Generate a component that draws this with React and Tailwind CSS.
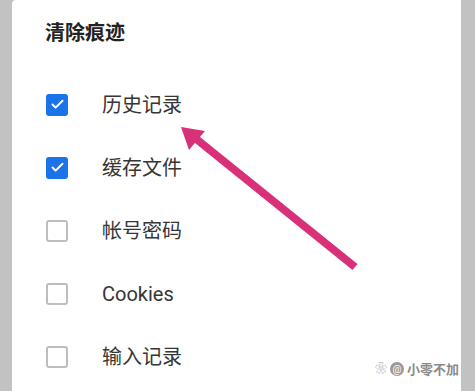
import { Check } from 'lucide-react';

const items = [
  { label: '历史记录', checked: true },
  { label: '缓存文件', checked: true },
  { label: '帐号密码', checked: false },
  { label: 'Cookies', checked: false },
  { label: '输入记录', checked: false },
];

const Checkbox = ({ checked }) =>
  checked ? (
    <div className="w-[22px] h-[22px] rounded-[3px] bg-[#1a73e8] flex items-center justify-center">
      <Check size={15} strokeWidth={3.2} className="text-white" />
    </div>
  ) : (
    <div className="w-[22px] h-[22px] rounded-[3px] border-2 border-[#bdbdbd] bg-white" />
  );

export default function App() {
  return (
    <div
      className="relative w-[475px] h-[391px] overflow-hidden flex bg-[#c2c2c2]"
      style={{ fontFamily: 'Roboto, "Noto Sans CJK SC", sans-serif' }}
    >
      <div className="w-[12px] bg-[#c2c2c2]" />
      <div className="flex-1 bg-white rounded-tl-[4px] flex flex-col">
        <div className="h-[64px] flex items-center pl-[33px] pt-[1px]">
          <h1 className="text-[20px] font-bold text-[#222]">清除痕迹</h1>
        </div>
        <div className="pt-[9px] flex flex-col">
          {items.map(item => (
            <div key={item.label} className="h-[63px] flex items-center pl-[34px] gap-[34px]">
              <Checkbox checked={item.checked} />
              <span className="text-[20px] text-[#363636]">{item.label}</span>
            </div>
          ))}
        </div>
      </div>
      <div className="w-[14px] bg-[#c2c2c2]" />

      <svg className="absolute inset-0 pointer-events-none" width="475" height="391">
        <line x1="355" y1="267" x2="195" y2="138" stroke="#d8317a" strokeWidth="8" strokeLinecap="butt" />
        <polygon points="181,127 205,131 189,150" fill="#d8317a" />
      </svg>

      <div className="absolute right-[16px] bottom-[12px] flex items-center gap-[3px] text-[13px] text-[#9a9a9a]">
        <span className="text-[12px]">❀</span>
        <span className="w-[14px] h-[14px] rounded-full bg-[#9a9a9a] text-white text-[10px] flex items-center justify-center">@</span>
        <span className="font-bold text-[#8a8a8a]">小零不加</span>
      </div>
    </div>
  );
}
